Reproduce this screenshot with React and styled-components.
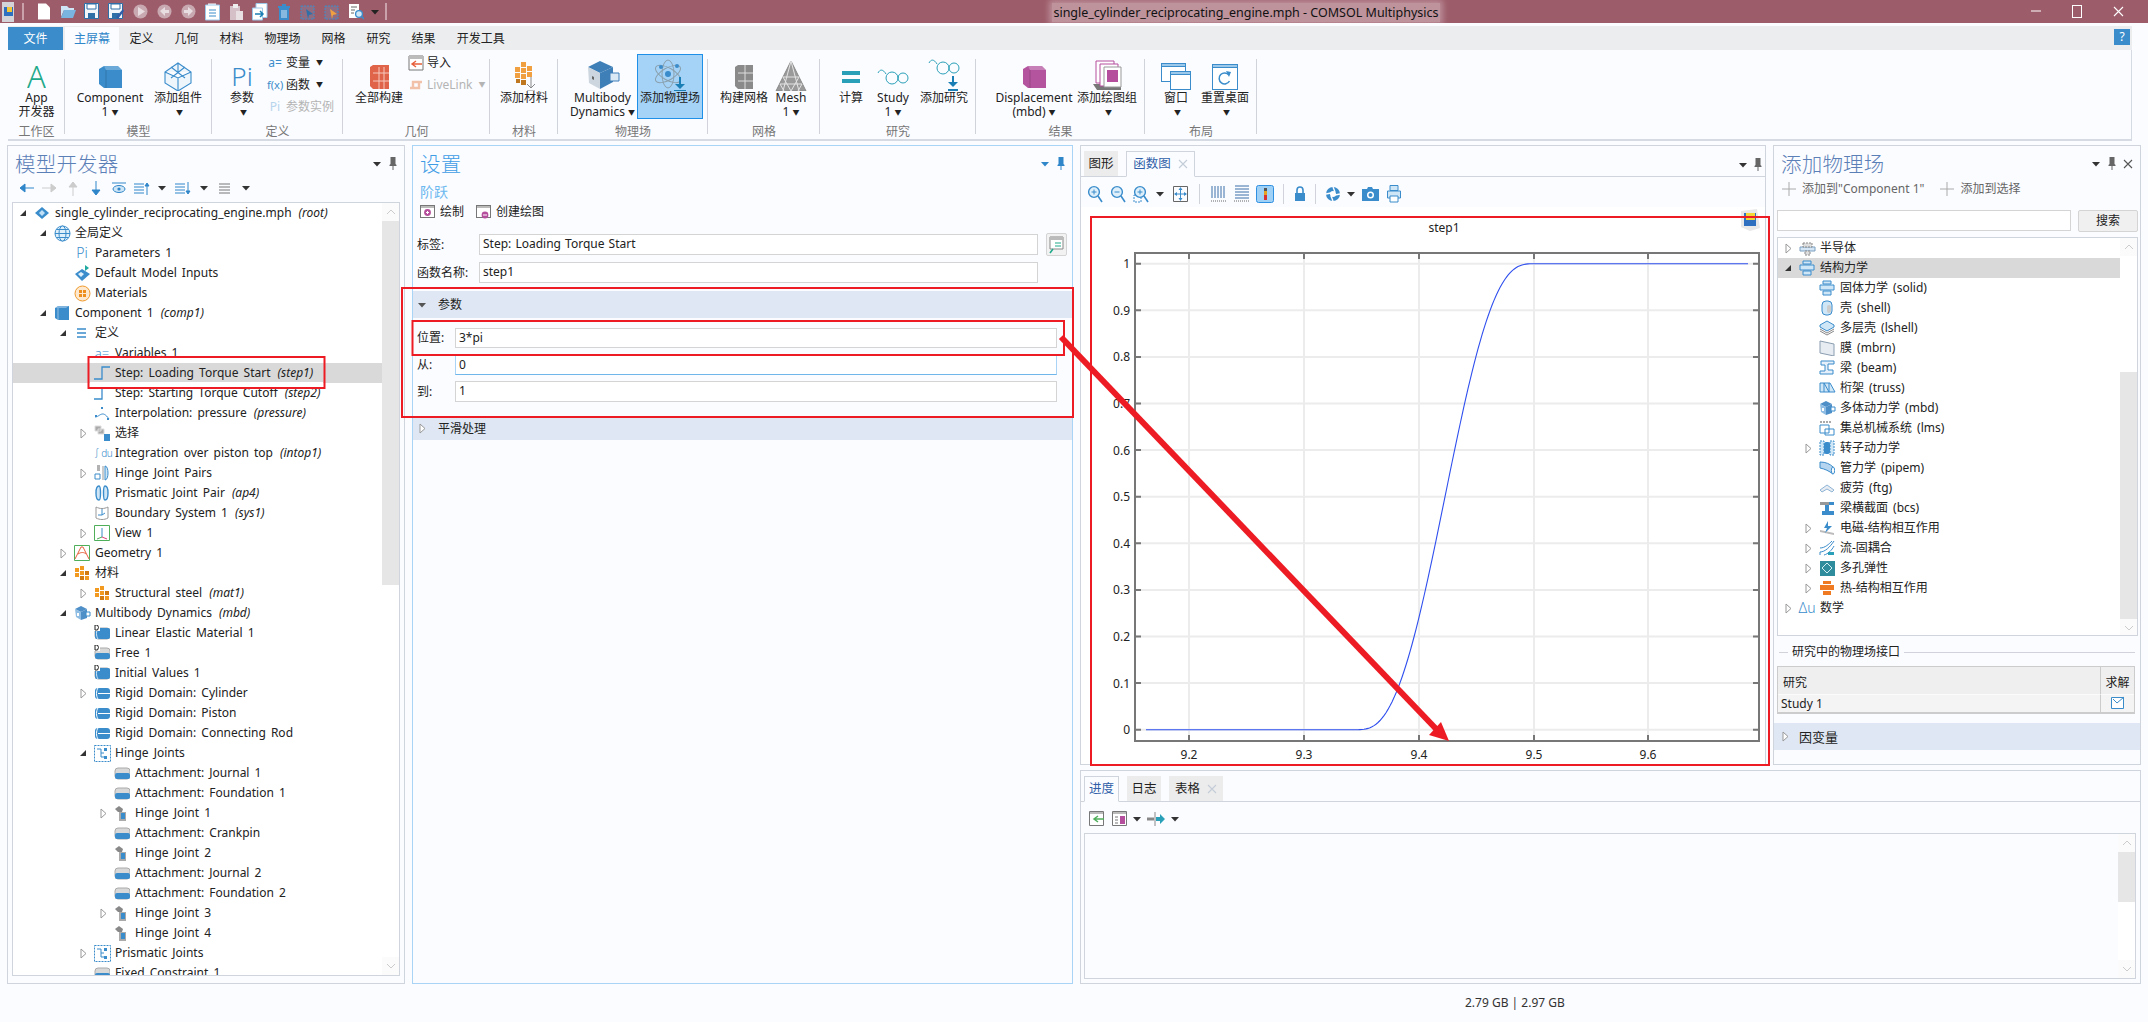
import React from 'react';
import styled, { createGlobalStyle } from 'styled-components';

const FONT = `"Noto Sans", "Noto Sans CJK SC", sans-serif`;
const BLUE = '#3a8ccb';

const Global = createGlobalStyle`
  html, body { margin: 0; padding: 0; background: #fbfcff; }
  body { font: 12px/16px ${FONT}; color: #222; width: 2148px; height: 1022px; overflow: hidden; }
  * { box-sizing: border-box; }
`;

const Page = styled.div`position: relative; width: 2148px; height: 1022px; display: flex; flex-direction: column;`;

/* title bar */
const TitleBar = styled.div`height: 23px; background: #9d5c6a; display: flex; align-items: center; flex: none; position: relative;`;
const QuickBar = styled.div`display: flex; align-items: center; width: 392px; padding-left: 2px; gap: 0;`;
const QuickSlot = styled.div`width: ${p => p.w || 24}px; height: 20px; display: flex; align-items: center; justify-content: center;`;
const QuickSep = styled.div`width: 2px; height: 17px; background: #c9a2ab; margin: ${p => p.m};`;
const WindowTitle = styled.div`
  position: absolute; left: 1052px; width: 388px; top: 3px; height: 19px; line-height: 19px; text-align: center;
  font-size: 12.5px; color: #111; background: rgba(255,255,255,.34); box-shadow: 0 0 6px 3px rgba(255,255,255,.3); white-space: nowrap;
`;
const WinButtons = styled.div`margin-left: auto; display: flex; align-items: center; padding-right: 24px; gap: 30px;`;

/* ribbon */
const TabBar = styled.div`margin: 3px 16px 0 8px; height: 24px; background: #ecedef; display: flex; flex: none; position: relative;`;
const FileTab = styled.div`width: 55px; height: 23px; margin-top: 1px; background: ${BLUE}; color: #fff; display: flex; align-items: center; justify-content: center;`;
const RibbonTab = styled.div`
  height: 23px; margin-top: 1px; display: flex; align-items: center; padding: 0 ${p => p.active ? 9 : 10.5}px;
  margin-left: ${p => p.active ? 2 : 0}px;
  color: ${p => p.active ? '#2f86c9' : '#222'}; background: ${p => p.active ? '#fbfcff' : 'transparent'};
`;
const HelpButton = styled.div`position: absolute; right: 2px; top: 3px; width: 16px; height: 16px; background: ${BLUE}; color: #fff; text-align: center; line-height: 16px; font-size: 12px;`;
const Ribbon = styled.div`margin: 0 16px 0 8px; height: 91px; display: flex; border-bottom: 2px solid #d6dae2; border-right: 1px solid #d6dae2; flex: none;`;
const Group = styled.div`
  width: ${p => p.w}px; position: relative; display: flex; flex-direction: column; padding-top: 4px;
  &::after { content: ''; position: absolute; right: 0; top: 9px; height: 75px; width: 1px; background: #d0d4da; }
`;
const GroupItems = styled.div`height: 65px; display: flex; padding-left: ${p => p.pad || 0}px;`;
const GroupLabel = styled.div`margin-top: 5px; text-align: center; color: #777; line-height: 16px;`;
const BigButton = styled.div`
  width: ${p => p.w}px; height: 65px; display: flex; flex-direction: column; align-items: center; flex: none;
  ${p => p.active && `background: #a5d3f7; outline: 1px solid #1e90e8; outline-offset: -1px;`}
`;
const BigIcon = styled.div`height: 37px; display: flex; align-items: center; justify-content: center; padding-top: ${p => p.top || 8}px; overflow: hidden;`;
const BigLabel = styled.div`line-height: 13.5px; text-align: center; white-space: nowrap;`;
const Drop = styled.span`font-size: 7px; vertical-align: 1px; margin-left: 3px;`;
const SmallCol = styled.div`display: flex; flex-direction: column; gap: 6px; padding-top: 1px; padding-left: ${p => p.pad || 0}px;`;
const SmallItem = styled.div`height: 16px; display: flex; align-items: center; gap: 3px; white-space: nowrap; color: ${p => p.off ? '#b4b4b4' : '#222'};`;
const AppGlyph = styled.span`font-size: 31px; line-height: 29px; font-weight: 300; color: #1fa98a;`;
const PiGlyph = styled.span`font-size: ${p => p.size || 26}px; line-height: 29px; font-weight: 300; color: ${p => p.off ? '#b7d6ee' : '#3a8ccb'};`;
const SmallGlyph = styled.span`width: 16px; text-align: center; color: ${p => p.off ? '#b7d6ee' : '#3a8ccb'}; font-size: ${p => p.size || 12}px;`;

/* panels */
const Main = styled.div`height: 839px; margin: 4px 8px 0 7px; display: flex; gap: 7px; flex: none;`;
const Panel = styled.div`
  width: ${p => p.w ? p.w + 'px' : 'auto'}; flex: ${p => p.grow ? 1 : 'none'};
  border: 1px solid ${p => p.active ? '#a9d4f5' : '#d0d4dc'}; background: #fbfcff; display: flex; flex-direction: column; min-height: 0;
`;
const RightStack = styled.div`width: 1061px; flex: none; display: flex; flex-direction: column; gap: 5px;`;
const TopRow = styled.div`height: 620px; display: flex; gap: 7px; flex: none;`;
const Head = styled.div`height: 31px; padding: 5px 0 0 7px; display: flex; align-items: flex-start; justify-content: space-between; flex: none;`;
const Title = styled.div`font-size: 20.5px; line-height: 26px; letter-spacing: .2px; font-weight: 300; color: ${p => p.active ? '#3f9de6' : '#5b80b8'};`;
const PinBox = styled.div`display: flex; align-items: center; gap: 7px; padding: 6px 7px 0 0;`;
const ToolRow = styled.div`height: ${p => p.h || 22}px; display: flex; align-items: center; padding: ${p => p.top || 0}px 0 0 ${p => p.pad || 7}px; flex: none;`;
const ToolSlot = styled.div`width: ${p => p.w || 23}px; height: 20px; display: flex; align-items: center; justify-content: center; flex: none;`;
const TreeBox = styled.div`
  margin: ${p => p.m}; height: ${p => p.h}px; border: 1px solid #d0d4dc; background: #fff; display: flex; overflow: hidden; flex: none;
`;
const TreeList = styled.div`flex: 1; min-width: 0;`;
const Row = styled.div`
  height: 20px; display: flex; align-items: center; padding-left: ${p => 4 + p.level * 20}px; white-space: nowrap; word-spacing: 2px;
  background: ${p => p.sel ? '#d9d9d9' : 'transparent'};
`;
const CaretBox = styled.div`width: 12px; height: 16px; margin-right: 4px; display: flex; align-items: center; justify-content: center; flex: none;`;
const IconBox = styled.div`width: 18px; height: 18px; margin-right: 4px; display: flex; align-items: center; justify-content: center; flex: none;`;
const TreeGlyph = styled.span`font-size: ${p => p.size}px; letter-spacing: ${p => p.ls || 0}px; line-height: 18px; color: ${BLUE}; white-space: nowrap; font-weight: 300;`;
const Tag = styled.i`margin-left: 7px;`;
const Scroll = styled.div`width: 17px; flex: none; display: flex; flex-direction: column; background: #fff;`;
const ScrollEnd = styled.div`height: 18px; display: flex; align-items: center; justify-content: center; flex: none; background: #fbfbfb;`;
const ScrollPart = styled.div`height: ${p => p.h ? p.h + 'px' : 'auto'}; flex: ${p => p.h ? 'none' : 1}; background: ${p => p.fill ? '#e6e6e6' : '#fff'};`;

/* settings */
const SubTitle = styled.div`height: 20px; margin-top: 5px; padding-left: 7px; color: #6db8ef; font-size: 14px; line-height: 20px; flex: none;`;
const ActionRow = styled.div`display: flex; align-items: center; height: 18px; padding-left: 7px; margin: 1px 0 13px; gap: 4px; flex: none;`;
const ActionGap = styled.div`width: 4px;`;
const FormRow = styled.div`
  display: flex; align-items: center; padding: 0 ${p => p.right}px 0 4px; height: ${p => p.h || 21}px; margin-top: ${p => p.mt || 0}px; margin-bottom: ${p => p.mb || 0}px; flex: none; position: relative;
`;
const FormLabel = styled.div`width: ${p => p.w}px; flex: none; white-space: nowrap;`;
const Input = styled.div`
  flex: 1; height: 100%; border: 1px solid ${p => p.focus ? '#a9d4f5' : '#d4d4d4'}; ${p => p.focus && 'border-top-color: #d4d4d4; border-bottom-color: #6fb6ea;'} background: #fff; padding-left: 3px; line-height: 18px; word-spacing: 1px;
`;
const SideButton = styled.div`position: absolute; right: 5px; top: -1px; width: 21px; height: 23px; border: 1px solid #d4d4d4; border-radius: 2px; background: #f2f2f2; display: flex; align-items: center; justify-content: center;`;
const Section = styled.div`
  height: ${p => p.h}px; background: #dee7f3; display: flex; align-items: center; gap: ${p => p.gap || 6}px; padding-left: ${p => p.pad || 3}px; margin: ${p => p.m || 0}; flex: none; font-size: ${p => p.size || 12}px;
`;

/* graphics + messages */
const TabStrip = styled.div`height: 31px; padding: 5px 0 0 3px; display: flex; gap: 8px; align-items: flex-end; border-bottom: 1px solid #d0d4dc; flex: none; position: relative;`;
const PanelTab = styled.div`
  height: 26px; width: ${p => p.w}px; margin-bottom: -1px; display: flex; align-items: center; justify-content: center; gap: 7px;
  font-size: 12.5px; background: ${p => p.active ? '#fbfcff' : '#ececec'}; color: ${p => p.active ? '#2f5fa8' : '#222'};
  border: ${p => p.active ? '1px solid #d0d4dc' : '0'}; border-bottom: 1px solid ${p => p.active ? '#fbfcff' : '#d0d4dc'};
`;
const StripPin = styled.div`position: absolute; right: 3px; bottom: 5px; display: flex; align-items: center; gap: 6px;`;
const PlotBox = styled.div`flex: 1; background: #fff; min-height: 0;`;
const MsgArea = styled.div`flex: 1; margin: 1px 4px 4px 3px; border: 1px solid #d0d4dc; background: #fbfcff; display: flex; justify-content: flex-end;`;
const ToolSep = styled.div`width: 1px; height: 20px; background: #d0d4da; margin: 0 7px;`;

/* add physics */
const AddRow = styled.div`height: 22px; margin-top: 1px; padding-left: 8px; display: flex; align-items: center; gap: 6px; color: #666; flex: none;`;
const SearchRow = styled.div`display: flex; margin: 10px 2px 0 3px; gap: 7px; height: 21px; flex: none;`;
const SearchInput = styled.div`flex: 1; border: 1px solid #d4d4d4; background: #fff;`;
const SearchButton = styled.div`width: 60px; height: 22px; border: 1px solid #d4d4d4; border-radius: 2px; background: #f0f0f0; text-align: center; line-height: 20px;`;
const GroupHead = styled.div`display: flex; align-items: center; margin: 8px 5px 6px 5px; gap: 4px; height: 16px; flex: none;`;
const HeadLine = styled.div`height: 1px; background: #d0d4da; flex: ${p => p.grow ? 1 : 'none'}; width: ${p => p.grow ? 'auto' : '9px'};`;
const StudyTable = styled.div`margin: 0 5px 0 3px; height: 48px; border: 1px solid #ccc; border-bottom-width: 2px; display: grid; grid-template-columns: 322px 1fr; grid-template-rows: 28px 1fr; flex: none; background: #f4f4f4;`;
const Cell = styled.div`
  display: flex; align-items: ${p => p.head ? 'flex-end' : 'center'}; padding: ${p => p.center ? '0 0 3px' : p.head ? '0 5px 3px' : '0 3px'}; justify-content: ${p => p.center ? 'center' : 'flex-start'}; white-space: nowrap;
  background: ${p => p.head ? '#efefef' : '#f4f4f4'}; ${p => p.head && 'border-bottom: 1px solid #fbfbfb;'} ${p => p.center && 'border-left: 1px solid #ccc;'}
`;

const StatusBar = styled.div`height: 38px; padding: 11px 0 0 1465px; color: #333; flex: none; white-space: nowrap;`;
const Overlay = styled.svg`position: absolute; left: 0; top: 0; pointer-events: none;`;

/* ---- icons ---- */
const Svg = ({ w = 16, h = 16, vb, children }) => <svg width={w} height={h} viewBox={vb || `0 0 ${w} ${h}`}>{children}</svg>;
const DropTri = ({ c = '#333' }) => <Svg w={9} h={6}><path d="M0 1h8L4 5.5z" fill={c} /></Svg>;
const Pin = ({ c = '#666' }) => <Svg w={8} h={13}><path d="M1.5 0h5v7l1 1v1H.5V8l1-1zM3.5 9h1v4h-1z" fill={c} /></Svg>;
const Caret = ({ open }) => open
  ? <Svg w={8} h={8}><path d="M7 1v6H1z" fill="#333" /></Svg>
  : <Svg w={7} h={11}><path d="M1 1l5 4.5L1 10z" fill="#fff" stroke="#999" /></Svg>;

const Cube = ({ s = 16, c = BLUE }) => (
  <Svg w={s} h={s} vb="0 0 16 16">
    <path d="M1 3l3-2h11v14H4l-3-2z" fill={c} />
    <path d="M1 3l3-2h11l-3 2z" fill="#fff" opacity=".35" />
    <path d="M4 3v12" stroke="#fff" opacity=".45" />
  </Svg>
);
const Diamond = () => <Svg><path d="M8 2l7 6-7 6-7-6z" fill={BLUE} /><path d="M8 5l3 3-3 3-3-3z" fill="#bfe0f7" /></Svg>;
const Globe = () => (
  <Svg w={17} h={17}><g fill="#dff0fb" stroke={BLUE}><circle cx="8.5" cy="8.5" r="7.5" /><ellipse cx="8.5" cy="8.5" rx="3.5" ry="7.5" /></g><path d="M1 8.5h15M2.5 4.5h12M2.5 12.5h12" stroke={BLUE} /></Svg>
);
const MatBall = () => (
  <Svg w={17} h={17}><circle cx="8.5" cy="8.5" r="7.5" fill="#fde9cf" stroke="#f09a2c" /><path d="M5 5h3v3H5zM9 5h3v3H9zM5 9h3v3H5zM9 9h3v3H9z" fill="#ee8f1d" /></Svg>
);
const MatGrid = () => (
  <Svg><path d="M1 3h4v4H1zM6 1h4v4H6zM1 8h4v4H1zM6 6h4v4H6zM11 6h4v4h-4zM6 11h4v4H6zM11 11h4v4h-4z" fill="#f29a1f" /><path d="M6 11h4v4H6zM11 6h4v4h-4z" fill="#d07a10" /></Svg>
);
const Inputs = () => <Svg w={17} h={17}><path d="M8 4l8 5-8 7-7-7z" fill={BLUE} /><path d="M7 7l3 2-3 3-3-3z" fill="#dff0fb" /><path d="M11 0l4 3-4 3z" fill="#1fa9a0" /></Svg>;
const Lines = () => <Svg w={12} h={10}><path d="M1 1h9M1 5h9M1 9h9" stroke={BLUE} strokeWidth="1.7" /></Svg>;
const StepIcon = () => <Svg><path d="M0 14h8V2h8" fill="none" stroke={BLUE} strokeWidth="1.3" /></Svg>;
const Interp = () => <Svg><path d="M1 12C6 12 8 4 15 14" fill="none" stroke={BLUE} /><path d="M1 10h2v2H1zM7 2h2v2H7zM13 13h2v2h-2z" fill={BLUE} /></Svg>;
const Selection = () => <Svg w={17} h={17}><path d="M1 1h6v5H1zM4 4h6v5H4z" fill="#aaa" stroke="#ddd" /><path d="M10 9h6v7h-6z" fill={BLUE} /></Svg>;
const HingePairs = () => <Svg><path d="M1 9h5v5H1z" fill="none" stroke={BLUE} /><path d="M3 1h3M3 3h3M3 5h3" stroke="#666" /><path d="M11 1c4 0 4 14 0 14z" fill="#cfe6f7" stroke={BLUE} /><path d="M9 1v14" stroke="#999" /></Svg>;
const Prism = () => <Svg><path d="M5 1C1 1 1 15 5 15 7 15 7 1 5 1zM11 1c-2 0 -2 14 0 14 4 0 4-14 0-14z" fill="#cfe6f7" stroke={BLUE} strokeWidth="1.4" /></Svg>;
const Boundary = () => <Svg><path d="M2 2c4 2 8 2 12 0v11c-4 2-8 2-12 0z" fill="#fff" stroke="#999" /><path d="M8 4v6H4M8 10l3-2" stroke={BLUE} fill="none" /></Svg>;
const ViewIcon = () => <Svg><path d="M.5.5h15v15H.5z" fill="#fff" stroke="#4fae5a" /><path d="M8 3v9" stroke={BLUE} /><path d="M8 12L3 14" stroke="#4fae5a" /><path d="M8 12l5 2" stroke="#e0407a" /></Svg>;
const GeomIcon = () => <Svg><path d="M.5.5h15v15H.5z" fill="#fff" stroke="#4fae5a" /><path d="M1 14L7 2h2l6 12M4 9c3-2 6-2 8 0" fill="none" stroke="#e8603c" /></Svg>;
const Multi = () => <Svg w={17} h={17}><path d="M1 4l6-3 6 3-6 3z" fill="#4f8fc8" /><path d="M1 4l6 3v8L2 12z" fill="#8fbde3" /><path d="M7 7l6-3v9l-6 2z" fill="#4f8fc8" /><path d="M12 7h4v4h-4z" fill="#fff" stroke={BLUE} /><path d="M3 8h2v3H3z" fill="#fff" /></Svg>;
const Drum = ({ fill = 1, d }) => (
  <Svg>
    <rect x="1" y="3" width="15" height="11" rx="3" fill="#d8d8d8" stroke="#aaa" />
    <rect x="1" y={fill ? 3 : 8} width="15" height={fill ? 11 : 6} rx="2" fill={BLUE} />
    {fill ? <path d="M4 3c-2 3-2 8 0 11" stroke="#cfe6f7" fill="none" /> : null}
    {d && <><rect x="0" y="0" width="6" height="6" fill="#fff" /><path d="M1 0h2.5q2 2.5 0 5H1z" fill="none" stroke="#222" /></>}
  </Svg>
);
const DomainDrum = () => <Svg><rect x="1" y="3" width="15" height="11" rx="3" fill={BLUE} /><path d="M4 3c-2 3-2 8 0 11M4 8.5h12" stroke="#fff" fill="none" /></Svg>;
const Joints = () => (
  <Svg w={17} h={17}><path d="M.5.5h16v16H.5z" fill="none" stroke={BLUE} strokeDasharray="2 1" /><path d="M3 4h4v8h3M3 4v0M7 8h3" stroke={BLUE} fill="none" /><path d="M10 3h3v3h-3zM10 11h3v3h-3z" fill={BLUE} /></Svg>
);
const HingeIcon = () => <Svg><path d="M1 4l4-3 4 3-1 3H4z" fill="#888" /><path d="M5 7h7v9H5z" fill="#aaa" /><path d="M7 8h4v6H7z" fill={BLUE} /></Svg>;

const Solid = () => <Svg><path d="M4 1h8v3H4zM1 5h14v5H1zM4 11h8v4H4z" fill="#cfe6f7" stroke={BLUE} /></Svg>;
const Shell = () => <Svg><rect x="3" y="1" width="10" height="14" rx="4" fill="#cfe6f7" stroke={BLUE} /><rect x="8" y="5" width="4" height="8" rx="2" fill="#ccc" /></Svg>;
const Layer = () => <Svg><path d="M1 5l7-4 7 4v2l-7 4-7-4z" fill="#cfe6f7" stroke={BLUE} /><path d="M1 9l7 4 7-4M1 11l7 4 7-4" fill="none" stroke="#888" /></Svg>;
const Membrane = () => <Svg><path d="M1 1l14 3v12L1 13z" fill="#e6ecf2" stroke="#8a9db0" /></Svg>;
const Beam = () => <Svg><path d="M2 1h13v3H9v6h5v4H1v-3h5V5H2z" fill="#e6f0fa" stroke={BLUE} /></Svg>;
const Truss = () => <Svg w={17} h={12}><path d="M1 10h15L11 1H1zM5 1v9M5 1l5 9M10 1v9" fill="#cfe6f7" stroke={BLUE} /></Svg>;
const Lumped = () => <Svg><path d="M1 5h9v8H1zM6 9h9v6H6z" fill="none" stroke={BLUE} /><path d="M2 3v-2M5 3v-2M8 3v-2M11 3v-2" stroke="#555" /></Svg>;
const Rotor = () => <Svg><path d="M1 1h4v14H1zM11 1h4v14h-4z" fill="#cfe6f7" stroke={BLUE} strokeDasharray="2 1" /><rect x="5" y="2" width="6" height="12" rx="2" fill={BLUE} /></Svg>;
const Pipe = () => <Svg><path d="M1 2c6 0 10 2 13 5v7c-4-3-8-5-13-6z" fill="#b4d4ef" stroke={BLUE} /><ellipse cx="14" cy="10.5" rx="1.6" ry="3.6" fill="#fff" stroke={BLUE} /></Svg>;
const Fatigue = () => <Svg w={16} h={10}><path d="M1 7l7-5 7 5-2 2-5-3-5 3z" fill="#e6ecf2" stroke="#8fb4d6" /></Svg>;
const BeamSec = () => <Svg><path d="M1 2h14v3H10v6h5v4H3v-4h3V5H1z" fill={BLUE} /><path d="M1 2h9v3H1z" fill="#999" /></Svg>;
const EmS = () => <Svg><path d="M1 12l14 3v-2L1 10z" fill="#bbb" /><path d="M9 1L5 8h3l-2 5 7-7H9z" fill={BLUE} /></Svg>;
const Fluid = () => <Svg><path d="M1 15V12C6 12 11 7 15 1M1 8C6 8 10 4 13 1M5 15c4-1 8-5 10-9" fill="none" stroke={BLUE} /><path d="M9 12h6v3H9z" fill="#2aa0b8" /></Svg>;
const Poro = () => <Svg><path d="M1 1h15v15H1z" fill="#2f8c9c" /><path d="M8 3l5 5-5 5-5-5z" fill="none" stroke="#cfeef2" /></Svg>;
const Heat = () => <Svg><path d="M4 1h8v3H4zM1 5h14v5H1zM4 11h8v4H4z" fill="#f07a22" /></Svg>;
const SemiIcon = () => <Svg w={17} h={17}><path d="M1 7h15v4H1z" fill="#d4e6f5" stroke="#7a9fc0" /><path d="M4 3h9v4H4zM6 11h5v4H6z" fill="#ddd" stroke="#888" strokeDasharray="2 1" /></Svg>;

const AddPlus = () => <Svg w={14} h={14}><path d="M7 0v14M0 7h14" stroke="#aaa" /></Svg>;
const Close = ({ s = 12, c = '#555' }) => <Svg w={s} h={s}><path d={`M1 1L${s - 1} ${s - 1}M${s - 1} 1L1 ${s - 1}`} stroke={c} strokeWidth="1.1" /></Svg>;

const Mag = ({ t }) => (
  <Svg w={16} h={18}>
    {t === 'box' && <path d="M1 10h7v7H1z" fill="none" stroke={BLUE} strokeDasharray="2 1" />}
    <circle cx="7" cy="7" r="5.4" fill="#dff0fb" stroke={BLUE} strokeWidth="1.4" />
    <path d="M11 11l4 6" stroke={BLUE} strokeWidth="1.6" />
    <path d={t === 'out' ? 'M4.5 7h5' : 'M4.5 7h5M7 4.5v5'} stroke={BLUE} />
  </Svg>
);
const Extents = () => <Svg><path d="M.5.5h14v15H.5z" fill="none" stroke="#666" /><path d="M7.5 2v12M2 8h11" stroke={BLUE} /><path d="M7.5 1l2 3h-4zM7.5 15l2-3h-4zM1 8l3-2v4zM14 8l-3-2v4z" fill={BLUE} /></Svg>;
const GridV = () => <Svg w={16} h={18}><path d="M1 1v12M4 1v12M7 1v12M10 1v12M13 1v12" stroke="#3a6ea8" /><path d="M0 16h16" stroke="#666" strokeDasharray="1 1" /></Svg>;
const GridH = () => <Svg w={16} h={18}><path d="M1 1h14M1 4h14M1 7h14M1 10h14M1 13h14" stroke="#3a6ea8" /><path d="M0 16h16" stroke="#666" strokeDasharray="1 1" /></Svg>;
const Legend = () => <Svg w={18} h={18}><rect x=".5" y=".5" width="17" height="17" rx="2" fill="#9fd0f5" stroke="#2f8fe0" /><path d="M8 3h3v3H8z" fill="#555" /><path d="M8 6h3v4H8z" fill="#e8a020" /><path d="M8 10h3v5H8z" fill="#d83030" /></Svg>;
const Lock = () => <Svg w={12} h={16}><path d="M3 7V4a3 3 0 016 0v3" fill="none" stroke={BLUE} strokeWidth="1.6" /><rect x="1" y="7" width="10" height="8" fill={BLUE} /></Svg>;
const Shutter = () => <Svg><circle cx="8" cy="8" r="7" fill={BLUE} /><circle cx="8" cy="8" r="3" fill="#fff" /><path d="M8 1l2 5M15 8l-5 1M8 15l-2-5M1 8l5-1" stroke="#fff" strokeWidth="1.4" /></Svg>;
const Camera = () => <Svg w={17} h={14}><path d="M0 2h5l1-2h4l1 2h6v12H0z" fill={BLUE} /><circle cx="8.5" cy="8" r="3.5" fill="#fff" /><circle cx="8.5" cy="8" r="2" fill={BLUE} /></Svg>;
const Printer = () => <Svg w={14} h={18}><path d="M3 .5h8v5H3zM.5 6h13v7H.5z" fill="#cfe6f7" stroke={BLUE} /><path d="M3 11h8v6H3z" fill="#fff" stroke={BLUE} /></Svg>;
const PlotBtn = ({ arrow }) => <Svg><rect x=".5" y="1.5" width="14" height="12" fill="#fff" stroke="#777" /><path d="M1 2h13v2H1z" fill="#bbb" /><circle cx={arrow ? 9 : 7.5} cy={arrow ? 11 : 8.5} r="3.4" fill="#b54e9c" /><path d={arrow ? 'M7 11h4' : 'M6 8.5h3M7.5 7v3'} stroke="#fff" /></Svg>;
const SideDoc = () => <Svg w={15} h={18}><path d="M1 1h13v12H1z" fill="#fff" stroke="#888" /><path d="M1 1h13v3H1z" fill="#bbb" /><path d="M6 7h6M6 10h6" stroke="#1fa98a" /><path d="M1 17l3-4" stroke="#1fa98a" strokeWidth="1.5" /></Svg>;

/* ribbon icons */
const BigCube = ({ c }) => (
  <Svg w={26} h={24}>
    <path d="M2 4l5-3h14l4 4v18H7l-5-4z" fill={c} />
    <path d="M7 1h14l4 4H9z" fill="#fff" opacity=".25" />
    <path d="M9 5v18" stroke="#000" opacity=".15" />
  </Svg>
);
const WireCube = () => <Svg w={30} h={30}><path d="M15 1l13 9v11l-13 8L2 21V10zM15 1v9M2 10l13 6 13-6M15 16v13M8 5l14 11M22 5L8 16" fill="#eef6fc" stroke={BLUE} strokeWidth="1.1" /></Svg>;
const BuildAll = () => <Svg w={22} h={26}><path d="M2 3l3-2h16v24H5l-3-3z" fill="#e0644a" /><path d="M5 9h16M5 17h16M11 3v22M16 3v22" stroke="#f6c9bd" /></Svg>;
const Import = () => <Svg w={16} h={16}><path d="M1 1h14v14H1z" fill="#fff" stroke="#777" /><path d="M1 1h14v3H1z" fill="#bbb" /><path d="M14 9H5M8 6L4 9l4 3" stroke="#e8603c" fill="none" strokeWidth="1.4" /></Svg>;
const LiveLink = () => <Svg w={16} h={16}><path d="M14 5H5v6M2 11h9V5" fill="none" stroke="#f2c1a9" strokeWidth="2.4" /></Svg>;
const AddMat = () => (
  <Svg w={26} h={32}>
    <path d="M10 1h5v5h-5zM4 6h5v5H4zM10 7h5v5h-5zM16 5h5v5h-5zM4 12h5v5H4zM16 11h5v5h-5zM10 13h5v5h-5z" fill="#f0a040" />
    <path d="M10 19h5v5h-5zM5 18h4v4H5z" fill="#c07820" />
    <path d="M20 16v10M16 23l4 4 4-4M16 30h8" stroke="#888" fill="none" />
  </Svg>
);
const BigMulti = () => (
  <Svg w={34} h={32}>
    <path d="M2 8l12-6 13 6-13 6z" fill="#3e7fb8" />
    <path d="M2 8l12 6v16L3 24z" fill="#cdd6df" />
    <path d="M14 14l13-6v15l-13 7z" fill="#3e7fb8" />
    <path d="M24 14h9v8h-9z" fill="#dbe9f5" stroke="#3e7fb8" />
    <path d="M6 17l2 1v3l-2-1z" fill="#666" />
  </Svg>
);
const Atom = () => (
  <Svg w={34} h={34}>
    <g fill="none" stroke="#8aa0ad"><ellipse cx="15" cy="15" rx="14" ry="6" transform="rotate(30 15 15)" /><ellipse cx="15" cy="15" rx="14" ry="6" transform="rotate(-30 15 15)" /><ellipse cx="15" cy="15" rx="6" ry="14" /></g>
    <circle cx="15" cy="15" r="3" fill={BLUE} /><circle cx="8" cy="8" r="2" fill={BLUE} /><circle cx="24" cy="7" r="2" fill={BLUE} />
    <path d="M27 18v10" stroke="#1b7fb5" strokeWidth="2" /><path d="M22 25h10l-5 5z" fill="#1b7fb5" /><path d="M21 32h12" stroke="#1b7fb5" strokeWidth="2" />
  </Svg>
);
const GreyCube = () => <Svg w={20} h={26}><path d="M1 3l3-2h15v24H4l-3-3z" fill="#8a8a8a" /><path d="M4 9h15M4 17h15M11 1v24" stroke="#ddd" /></Svg>;
const MeshIcon = () => <Svg w={32} h={32}><path d="M16 1l15 30H1z" fill="#9a9a9a" stroke="#888" /><path d="M8 17h16M5 24h22M16 1l-8 30M16 1l8 30M8 17l8 14 8-14M5 24l4 7M27 24l-4 7" stroke="#e4e4e4" fill="none" /></Svg>;
const Equals = () => <Svg w={20} h={14}><path d="M1 1h18v4H1zM1 9h18v4H1z" fill="#2aa0b8" /></Svg>;
const Glasses = () => <Svg w={32} h={20}><path d="M1 6c2-4 5-4 8 1" fill="none" stroke="#2aa0b8" /><circle cx="15" cy="11" r="6" fill="none" stroke="#2aa0b8" /><circle cx="26" cy="11" r="5" fill="none" stroke="#2aa0b8" /><path d="M21 10h1" stroke="#2aa0b8" /></Svg>;
const AddStudy = () => <Svg w={32} h={34}><path d="M1 4c2-4 5-4 8 1" fill="none" stroke="#2aa0b8" /><circle cx="15" cy="9" r="6" fill="none" stroke="#2aa0b8" /><circle cx="26" cy="9" r="5" fill="none" stroke="#2aa0b8" /><path d="M25 17v8" stroke="#1b7fb5" strokeWidth="2" /><path d="M20 23h10l-5 5z" fill="#1b7fb5" /><path d="M20 31h10" stroke="#1b7fb5" strokeWidth="2" /></Svg>;
const PlotStack = () => <Svg w={30} h={32}><path d="M1 24l4 6h24v-6z" fill="#777" /><path d="M4 1h18v22H4z" fill="#fff" stroke="#b54e9c" /><path d="M8 4h18v22H8z" fill="#fff" stroke="#b54e9c" /><path d="M12 7h17v20H12z" fill="#fff" stroke="#999" /><path d="M15 10h11v12H15z" fill="#b54e9c" /></Svg>;
const Win = ({ x = 0, y = 0, w, h }) => <g><rect x={x + .5} y={y + .5} width={w} height={h} fill="#fff" stroke={BLUE} /><rect x={x + .5} y={y + .5} width={w} height="3" fill="#9cc9ea" stroke={BLUE} /></g>;
const Windows = () => <Svg w={30} h={28}><Win w={24} h={18} /><Win x={9} y={8} w={20} h={18} /></Svg>;
const Reset = () => <Svg w={26} h={26}><Win w={25} h={25} /><path d="M17 11a5.5 5.5 0 10.5 6" fill="none" stroke={BLUE} strokeWidth="1.5" /><path d="M14 7l5 1-2 5z" fill={BLUE} /></Svg>;

const AppLogo = () => <Svg w={12} h={20}><rect width="12" height="20" fill="#d4d4d8" /><rect x="2" y="5" width="9" height="9" fill="#2f6fc0" /><rect x="5" y="5" width="5" height="5" fill="#f3c637" /></Svg>;
const QDoc = () => <Svg w={14} h={17}><path d="M1 .5h8l4 4v12H1z" fill="#fff" /></Svg>;
const QOpen = () => <Svg w={16} h={15}><path d="M1 2h6l2 2h5v2H4L1 13z" fill="#cfe6f7" /><path d="M4 6h12l-3 8H1z" fill="#7ab4e0" /></Svg>;
const QSave = ({ pen }) => <Svg w={16} h={17}><path d="M.5.5h14v15H.5z" fill="#f2f5f9" stroke="#2f6fa8" /><path d="M3 1h9v5H3z" fill="#fff" stroke="#2f6fa8" /><path d="M4 10h7v5H4z" fill="#2f6fa8" />{pen && <path d="M8 14l7-8 1 2-6 8z" fill="#2f5da8" />}</Svg>;
const QRound = ({ d }) => <Svg w={15} h={15}><circle cx="7.5" cy="7.5" r="7" fill="#c9a9b1" /><path d={d} fill="#e8dde0" /></Svg>;
const QList = () => <Svg w={15} h={18}><path d="M3 .5h8v3H3z" fill="#fff" /><path d="M.5 2h14v15H.5z" fill="#fff" stroke="#9cc9ea" /><path d="M4 7h7M4 10h7M4 13h7" stroke={BLUE} /></Svg>;
const QPaste = () => <Svg w={15} h={18}><path d="M1 3h10v14H1z" fill="#d4c0c6" /><path d="M4 1h5v4H4z" fill="#eee" /><path d="M7 8h7v9H7z" fill="#e8e0e2" /></Svg>;
const QMove = () => <Svg w={16} h={18}><path d="M4 .5h11v14H4z" fill="#fff" stroke="#9cc9ea" /><path d="M.5 5h10v12H.5z" fill="#fff" stroke="#9cc9ea" /><path d="M3 11h8M8 8l3 3-3 3" stroke="#1b7fb5" fill="none" strokeWidth="1.5" /></Svg>;
const QTrash = () => <Svg w={14} h={18}><path d="M1 3h12v2H1zM5 1h4v2H5z" fill={BLUE} /><path d="M2 5h10v12H2z" fill={BLUE} /><path d="M5 7v8M7 7v8M9 7v8" stroke="#d4e6f5" /></Svg>;
const QBox = ({ c }) => <Svg w={16} h={18}><path d="M1 3h13v13H1z" fill="#7a8aa8" fillOpacity=".35" stroke={BLUE} strokeDasharray="2 1" /><path d="M6 6l7 5-4 1-1 4z" fill={c} /></Svg>;
const QFind = () => <Svg w={16} h={18}><path d="M1 1h10v14H1z" fill="#fff" /><path d="M3 4h6M3 7h4M3 10h3" stroke="#666" /><circle cx="11" cy="11" r="3.4" fill="#cfe6f7" stroke={BLUE} strokeWidth="1.3" /><path d="M13 13l3 3" stroke={BLUE} strokeWidth="1.6" /></Svg>;

const Colorbar = () => <Svg w={24} h={24}><path d="M3 3l16-2 3 19-10 3-9-4z" fill="#e8e8e8" /><rect x="6" y="5" width="12" height="13" fill="#2f6fc0" /><rect x="8" y="5" width="9" height="7" fill="#f3d637" /></Svg>;

/* ---- data ---- */
const glyph = (text, size, ls) => () => <TreeGlyph size={size} ls={ls}>{text}</TreeGlyph>;
const DrumD = () => <Drum d />;
const DrumFreeD = () => <Drum fill={0} d />;
const DrumHalf = () => <Drum fill={0} />;

const devTree = [
  [0, 1, Diamond, 'single_cylinder_reciprocating_engine.mph', 'root'],
  [1, 1, Globe, '全局定义'],
  [2, null, glyph('Pi', 14), 'Parameters 1'],
  [2, null, Inputs, 'Default Model Inputs'],
  [2, null, MatBall, 'Materials'],
  [1, 1, Cube, 'Component 1', 'comp1'],
  [2, 1, Lines, '定义'],
  [3, null, glyph('a=', 13), 'Variables 1'],
  [3, null, StepIcon, 'Step: Loading Torque Start', 'step1', true],
  [3, null, StepIcon, 'Step: Starting Torque Cutoff', 'step2'],
  [3, null, Interp, 'Interpolation: pressure', 'pressure'],
  [3, 0, Selection, '选择'],
  [3, null, glyph('∫du', 10, -.5), 'Integration over piston top', 'intop1'],
  [3, 0, HingePairs, 'Hinge Joint Pairs'],
  [3, null, Prism, 'Prismatic Joint Pair', 'ap4'],
  [3, null, Boundary, 'Boundary System 1', 'sys1'],
  [3, 0, ViewIcon, 'View 1'],
  [2, 0, GeomIcon, 'Geometry 1'],
  [2, 1, MatGrid, '材料'],
  [3, 0, MatGrid, 'Structural steel', 'mat1'],
  [2, 1, Multi, 'Multibody Dynamics', 'mbd'],
  [3, null, DrumD, 'Linear Elastic Material 1'],
  [3, null, DrumFreeD, 'Free 1'],
  [3, null, DrumD, 'Initial Values 1'],
  [3, 0, DomainDrum, 'Rigid Domain: Cylinder'],
  [3, null, DomainDrum, 'Rigid Domain: Piston'],
  [3, null, DomainDrum, 'Rigid Domain: Connecting Rod'],
  [3, 1, Joints, 'Hinge Joints'],
  [4, null, DrumHalf, 'Attachment: Journal 1'],
  [4, null, DrumHalf, 'Attachment: Foundation 1'],
  [4, 0, HingeIcon, 'Hinge Joint 1'],
  [4, null, DrumHalf, 'Attachment: Crankpin'],
  [4, null, HingeIcon, 'Hinge Joint 2'],
  [4, null, DrumHalf, 'Attachment: Journal 2'],
  [4, null, DrumHalf, 'Attachment: Foundation 2'],
  [4, 0, HingeIcon, 'Hinge Joint 3'],
  [4, null, HingeIcon, 'Hinge Joint 4'],
  [3, 0, Joints, 'Prismatic Joints'],
  [3, null, DrumHalf, 'Fixed Constraint 1'],
];

const physTree = [
  [0, 0, SemiIcon, '半导体'],
  [0, 1, Solid, '结构力学', null, true],
  [1, null, Solid, '固体力学 (solid)'],
  [1, null, Shell, '壳 (shell)'],
  [1, null, Layer, '多层壳 (lshell)'],
  [1, null, Membrane, '膜 (mbrn)'],
  [1, null, Beam, '梁 (beam)'],
  [1, null, Truss, '桁架 (truss)'],
  [1, null, Multi, '多体动力学 (mbd)'],
  [1, null, Lumped, '集总机械系统 (lms)'],
  [1, 0, Rotor, '转子动力学'],
  [1, null, Pipe, '管力学 (pipem)'],
  [1, null, Fatigue, '疲劳 (ftg)'],
  [1, null, BeamSec, '梁横截面 (bcs)'],
  [1, 0, EmS, '电磁-结构相互作用'],
  [1, 0, Fluid, '流-固耦合'],
  [1, 0, Poro, '多孔弹性'],
  [1, 0, Heat, '热-结构相互作用'],
  [0, 0, glyph('Δu', 14), '数学'],
];

const TreeRows = ({ rows }) => rows.map(([level, open, Ico, name, tag, sel], i) => (
  <Row key={i} level={level} sel={sel}>
    <CaretBox>{open !== null && <Caret open={open === 1} />}</CaretBox>
    <IconBox><Ico /></IconBox>
    <span>{name}</span>
    {tag && <Tag>({tag})</Tag>}
  </Row>
));

const chevron = d => <Svg w={10} h={6}><path d={d} fill="none" stroke="#ccc" /></Svg>;
const UP = 'M1 5l4-4 4 4';
const DOWN = 'M1 1l4 4 4-4';

/* plot, coordinates are relative to the white area (1081, 207) */
const OX = 1081, OY = 207;
const xTicks = [[1189, '9.2'], [1304, '9.3'], [1419, '9.4'], [1534, '9.5'], [1648, '9.6']];
const yTicks = [1, .9, .8, .7, .6, .5, .4, .3, .2, .1, 0];
const yOf = v => 729.7 - v * 466;
const curve = () => {
  const pts = [];
  for (let x = 1146; x <= 1748; x += 2) {
    const t = Math.min(1, Math.max(0, (x - 1356) / 178));
    const v = t * t * t * (10 - 15 * t + 6 * t * t);
    pts.push(`${x},${yOf(v).toFixed(1)}`);
  }
  return pts.join(' ');
};

const Plot = () => (
  <svg width="683" height="557" viewBox={`${OX} ${OY} 683 557`} style={{ display: 'block' }}>
    <text x="1444" y="232" textAnchor="middle" fontSize="12" fill="#222">step1</text>
    {xTicks.map(([x]) => <path key={x} d={`M${x} 253V741`} stroke="#ececec" strokeWidth="2" />)}
    {yTicks.map(v => <path key={v} d={`M1135 ${yOf(v)}H1759`} stroke="#ececec" strokeWidth="2" />)}
    <path d="M1135 253H1759V741H1135z" fill="none" stroke="#777" strokeWidth="2" />
    {xTicks.map(([x, l]) => (
      <g key={x}>
        <path d={`M${x} 253v6M${x} 741v-6`} stroke="#777" strokeWidth="2" />
        <text x={x} y="759" textAnchor="middle" fontSize="12" fill="#222">{l}</text>
      </g>
    ))}
    {yTicks.map(v => (
      <g key={v}>
        <path d={`M1135 ${yOf(v)}h6M1759 ${yOf(v)}h-6`} stroke="#777" strokeWidth="2" />
        <text x="1130" y={yOf(v) + 4.5} textAnchor="end" fontSize="12" fill="#222">{v}</text>
      </g>
    ))}
    <polyline points={curve()} fill="none" stroke="#2f4fee" strokeWidth="1.1" />
    <g transform="translate(1738 208)"><Colorbar /></g>
  </svg>
);

const R = ({ w, pad, label, children }) => (
  <Group w={w}>
    <GroupItems pad={pad}>{children}</GroupItems>
    <GroupLabel>{label}</GroupLabel>
  </Group>
);
const Big = ({ w, icon, top, lines, active }) => (
  <BigButton w={w} active={active}>
    <BigIcon top={top}>{icon}</BigIcon>
    <BigLabel>{lines.map((l, i) => <div key={i}>{l}</div>)}</BigLabel>
  </BigButton>
);
const D = () => <Drop>▼</Drop>;

const plotTools = [
  [23, <Mag />], [23, <Mag t="out" />], [23, <Mag t="box" />], [17, <DropTri />], [23, <Extents />], 'sep',
  [23, <GridV />], [23, <GridH />], [23, <Legend />], 'sep', [17, <Lock />], 'sep', [20, <Shutter />], [16, <DropTri />], [23, <Camera />], [24, <Printer />],
];

export default function App() {
  return (
    <Page>
      <Global />
      <TitleBar>
        <QuickBar>
          <AppLogo />
          <QuickSep m="0 8px 0 8px" />
          <QuickSlot><QDoc /></QuickSlot>
          <QuickSlot><QOpen /></QuickSlot>
          <QuickSlot><QSave /></QuickSlot>
          <QuickSlot><QSave pen /></QuickSlot>
          <QuickSlot><QRound d="M5 3l7 4.5L5 12z" /></QuickSlot>
          <QuickSlot><QRound d="M3 7l5-4v3h4v3H8v3z" /></QuickSlot>
          <QuickSlot><QRound d="M12 7L7 3v3H3v3h4v3z" /></QuickSlot>
          <QuickSlot><QList /></QuickSlot>
          <QuickSlot><QPaste /></QuickSlot>
          <QuickSlot><QMove /></QuickSlot>
          <QuickSlot><QTrash /></QuickSlot>
          <QuickSlot><QBox c="#2f6fa8" /></QuickSlot>
          <QuickSlot><QBox c="#f0a040" /></QuickSlot>
          <QuickSlot><QFind /></QuickSlot>
          <QuickSlot w={14}><DropTri c="#222" /></QuickSlot>
          <QuickSep m="0 0 0 3px" />
        </QuickBar>
        <WindowTitle>single_cylinder_reciprocating_engine.mph - COMSOL Multiphysics</WindowTitle>
        <WinButtons>
          <Svg w={11} h={3}><path d="M0 1h10" stroke="#fff" /></Svg>
          <Svg w={11} h={14}><rect x=".5" y=".5" width="9" height="12" fill="none" stroke="#fff" /></Svg>
          <Close s={11} c="#fff" />
        </WinButtons>
      </TitleBar>

      <TabBar>
        <FileTab>文件</FileTab>
        <RibbonTab active>主屏幕</RibbonTab>
        {['定义', '几何', '材料', '物理场', '网格', '研究', '结果', '开发工具'].map(t => <RibbonTab key={t}>{t}</RibbonTab>)}
        <HelpButton>?</HelpButton>
      </TabBar>

      <Ribbon>
        <R w={57} label="工作区"><Big w={57} icon={<AppGlyph>A</AppGlyph>} lines={['App', '开发器']} /></R>
        <R w={147} pad={9} label="模型">
          <Big w={72} icon={<BigCube c={BLUE} />} lines={['Component', <>1<D /></>]} />
          <Big w={64} icon={<WireCube />} lines={['添加组件', <D />]} />
        </R>
        <R w={131} pad={10} label="定义">
          <Big w={40} icon={<PiGlyph>Pi</PiGlyph>} lines={['参数', <D />]} />
          <SmallCol pad={5}>
            <SmallItem><SmallGlyph>a=</SmallGlyph>变量<D /></SmallItem>
            <SmallItem><SmallGlyph size={11}>f(x)</SmallGlyph>函数<D /></SmallItem>
            <SmallItem off><SmallGlyph off>Pi</SmallGlyph>参数实例</SmallItem>
          </SmallCol>
        </R>
        <R w={147} pad={7} label="几何">
          <Big w={58} icon={<BuildAll />} lines={['全部构建']} />
          <SmallCol>
            <SmallItem><Import />导入</SmallItem>
            <SmallItem off><LiveLink />LiveLink<D /></SmallItem>
          </SmallCol>
        </R>
        <R w={68} pad={2} label="材料"><Big w={64} icon={<AddMat />} lines={['添加材料']} /></R>
        <R w={150} pad={10} label="物理场">
          <Big w={69} top={4} icon={<BigMulti />} lines={['Multibody', <>Dynamics<D /></>]} />
          <Big w={66} top={6} active icon={<Atom />} lines={['添加物理场']} />
        </R>
        <R w={112} pad={9} label="网格">
          <Big w={54} icon={<GreyCube />} lines={['构建网格']} />
          <Big w={40} top={6} icon={<MeshIcon />} lines={['Mesh', <>1<D /></>]} />
        </R>
        <R w={156} pad={9} label="研究">
          <Big w={44} icon={<Equals />} lines={['计算']} />
          <Big w={40} icon={<Glasses />} lines={['Study', <>1<D /></>]} />
          <Big w={62} top={6} icon={<AddStudy />} lines={['添加研究']} />
        </R>
        <R w={169} pad={15} label="结果">
          <Big w={86} icon={<BigCube c="#b4549f" />} lines={['Displacement', <>(mbd)<D /></>]} />
          <Big w={60} top={6} icon={<PlotStack />} lines={['添加绘图组', <D />]} />
        </R>
        <R w={112} pad={7} label="布局">
          <Big w={48} icon={<Windows />} lines={['窗口', <D />]} />
          <Big w={50} icon={<Reset />} lines={['重置桌面', <D />]} />
        </R>
      </Ribbon>

      <Main>
        <Panel w={398}>
          <Head>
            <Title>模型开发器</Title>
            <PinBox><DropTri /><Pin /></PinBox>
          </Head>
          <ToolRow pad={7}>
            <ToolSlot><Svg w={15} h={10}><path d="M15 5H3M6 1L1 5l5 4z" stroke="#2f86c9" fill="#2f86c9" /></Svg></ToolSlot>
            <ToolSlot><Svg w={15} h={10}><path d="M0 5h12M9 1l5 4-5 4z" stroke="#ccc" fill="#ccc" /></Svg></ToolSlot>
            <ToolSlot><Svg w={10} h={15}><path d="M5 15V3M1 6l4-5 4 5z" stroke="#ccc" fill="#ccc" /></Svg></ToolSlot>
            <ToolSlot><Svg w={10} h={15}><path d="M5 0v12M1 9l4 5 4-5z" stroke="#2f86c9" fill="#2f86c9" /></Svg></ToolSlot>
            <ToolSlot><Svg w={14} h={12}><path d="M0 1h14" stroke="#2f86c9" /><ellipse cx="7" cy="7" rx="6" ry="3.5" fill="#cfe6f7" stroke="#2f86c9" /><circle cx="7" cy="7" r="1.6" fill="#2f86c9" /></Svg></ToolSlot>
            <ToolSlot w={23}><Svg w={16} h={13}><path d="M0 2h10M0 5h10M0 8h10M0 11h10" stroke="#2f86c9" /><path d="M13 13V3M11 4l2-3 2 3z" stroke="#2f86c9" fill="#2f86c9" /></Svg></ToolSlot>
            <ToolSlot w={18}><DropTri /></ToolSlot>
            <ToolSlot w={24}><Svg w={16} h={13}><path d="M0 2h10M0 5h10M0 8h10M0 11h10" stroke="#2f86c9" /><path d="M13 0v10M11 9l2 3 2-3z" stroke="#2f86c9" fill="#2f86c9" /></Svg></ToolSlot>
            <ToolSlot w={18}><DropTri /></ToolSlot>
            <ToolSlot w={24}><Svg w={12} h={13}><path d="M0 2h11M0 5h11M0 8h11M0 11h11" stroke="#777" /></Svg></ToolSlot>
            <ToolSlot w={18}><DropTri /></ToolSlot>
          </ToolRow>
          <TreeBox m="3px 4px 0" h={774}>
            <TreeList><TreeRows rows={devTree} /></TreeList>
            <Scroll>
              <ScrollEnd>{chevron(UP)}</ScrollEnd>
              <ScrollPart fill h={364} />
              <ScrollPart />
              <ScrollEnd>{chevron(DOWN)}</ScrollEnd>
            </Scroll>
          </TreeBox>
        </Panel>

        <Panel w={661} active>
          <Head>
            <Title active>设置</Title>
            <PinBox><DropTri c="#2f86c9" /><Pin c="#2f86c9" /></PinBox>
          </Head>
          <SubTitle>阶跃</SubTitle>
          <ActionRow>
            <PlotBtn />绘制<ActionGap /><PlotBtn arrow />创建绘图
          </ActionRow>
          <FormRow mb={7} right={34}><FormLabel w={62}>标签:</FormLabel><Input>Step: Loading Torque Start</Input><SideButton><SideDoc /></SideButton></FormRow>
          <FormRow mb={8} right={34}><FormLabel w={62}>函数名称:</FormLabel><Input>step1</Input></FormRow>
          <Section h={27}><CaretBox><DropTri c="#555" /></CaretBox>参数</Section>
          <FormRow h={20} mt={10} mb={7} right={15}><FormLabel w={38}>位置:</FormLabel><Input>3*pi</Input></FormRow>
          <FormRow h={20} mb={6} right={15}><FormLabel w={38}>从:</FormLabel><Input focus>0</Input></FormRow>
          <FormRow h={21} mb={15} right={15}><FormLabel w={38}>到:</FormLabel><Input>1</Input></FormRow>
          <Section h={23}><CaretBox><Caret open={false} /></CaretBox>平滑处理</Section>
        </Panel>

        <RightStack>
          <TopRow>
            <Panel w={686}>
              <TabStrip>
                <PanelTab w={34}>图形</PanelTab>
                <PanelTab w={69} active>函数图<Close s={10} c="#c4ccd8" /></PanelTab>
                <StripPin><DropTri /><Pin /></StripPin>
              </TabStrip>
              <ToolRow pad={2} h={30} top={3}>
                {plotTools.map((t, i) => t === 'sep'
                  ? <ToolSep key={i} />
                  : <ToolSlot key={i} w={t[0]}>{t[1]}</ToolSlot>)}
              </ToolRow>
              <PlotBox><Plot /></PlotBox>
            </Panel>

            <Panel w={368}>
              <Head>
                <Title>添加物理场</Title>
                <PinBox><DropTri /><Pin /><Close s={10} /></PinBox>
              </Head>
              <AddRow>
                <AddPlus />添加到"Component 1"<ActionGap /><AddPlus />添加到选择
              </AddRow>
              <SearchRow><SearchInput /><SearchButton>搜索</SearchButton></SearchRow>
              <TreeBox m="6px 2px 0 3px" h={399}>
                <TreeList><TreeRows rows={physTree} /></TreeList>
                <Scroll>
                  <ScrollEnd>{chevron(UP)}</ScrollEnd>
                  <ScrollPart h={116} />
                  <ScrollPart fill h={247} />
                  <ScrollEnd>{chevron(DOWN)}</ScrollEnd>
                </Scroll>
              </TreeBox>
              <GroupHead><HeadLine /><span>研究中的物理场接口</span><HeadLine grow /></GroupHead>
              <StudyTable>
                <Cell head>研究</Cell>
                <Cell head center>求解</Cell>
                <Cell>Study 1</Cell>
                <Cell center><Svg w={14} h={13}><path d="M.5 1.5h12v11H.5z" fill="#fff" stroke={BLUE} /><path d="M2 3l4 4 7-6" fill="none" stroke={BLUE} /></Svg></Cell>
              </StudyTable>
              <Section h={27} pad={5} gap={4} size={13} m="9px 0 0"><CaretBox><Caret open={false} /></CaretBox>因变量</Section>
            </Panel>
          </TopRow>

          <Panel grow>
            <TabStrip>
              <PanelTab w={35} active>进度</PanelTab>
              <PanelTab w={34}>日志</PanelTab>
              <PanelTab w={54}>表格<Close s={10} c="#c4ccd8" /></PanelTab>
            </TabStrip>
            <ToolRow pad={4} h={30} top={3}>
              <ToolSlot><Svg w={16} h={15}><path d="M.5.5h14v14H.5z" fill="#fff" stroke="#777" /><path d="M1 1h13v2H1z" fill="#bbb" /><path d="M15 8H6M9 5L5 8l4 3" stroke="#4fae5a" fill="none" strokeWidth="1.5" /></Svg></ToolSlot>
              <ToolSlot><Svg w={16} h={15}><path d="M.5.5h14v14H.5z" fill="#fff" stroke="#777" /><path d="M1 1h13v2H1z" fill="#bbb" /><path d="M8 5h5v8H8z" fill="#b54e9c" /><path d="M3 6h3M3 9h3M3 12h3" stroke="#777" /></Svg></ToolSlot>
              <ToolSlot w={12}><DropTri /></ToolSlot>
              <ToolSlot w={26}><Svg w={18} h={14}><path d="M0 7h7" stroke="#888" strokeWidth="3" /><path d="M8 0v14" stroke="#888" /><path d="M9 5h4V2l5 5-5 5V9H9z" fill="#2aa0b8" /></Svg></ToolSlot>
              <ToolSlot w={12}><DropTri /></ToolSlot>
            </ToolRow>
            <MsgArea>
              <Scroll>
                <ScrollEnd>{chevron(UP)}</ScrollEnd>
                <ScrollPart fill h={50} />
                <ScrollPart />
                <ScrollEnd>{chevron(DOWN)}</ScrollEnd>
              </Scroll>
            </MsgArea>
          </Panel>
        </RightStack>
      </Main>

      <StatusBar>2.79 GB | 2.97 GB</StatusBar>

      <Overlay width="2148" height="1022">
        <path d="M90 358h233v4H90zM90 382h233v5H90z" fill="#fff" />
        <g fill="none" stroke="#ed1c24" strokeWidth="2">
          <rect x="88.5" y="357" width="236" height="31" />
          <rect x="402" y="288" width="671" height="129" />
          <rect x="412.5" y="321" width="651.5" height="34" />
          <rect x="1091" y="217" width="678" height="548" />
        </g>
        <path d="M1061 337L1440 733" stroke="#ed1c24" strokeWidth="6" />
        <path d="M1449 741L1441 722L1429 735z" fill="#ed1c24" />
      </Overlay>
    </Page>
  );
}
